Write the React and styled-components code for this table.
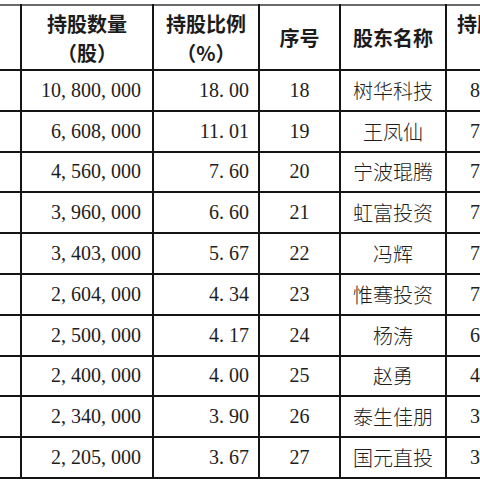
import React from "react";
import styled, { createGlobalStyle } from "styled-components";

const Global = createGlobalStyle`
  html, body { margin: 0; padding: 0; background: #ffffff; }
  #root { width: 480px; height: 480px; }
`;

const Frame = styled.div`
  width: 480px;
  height: 480px;
  overflow: hidden;
  background: #fff;
  padding-top: 4px;
  box-sizing: border-box;
`;

const Table = styled.table`
  border-collapse: collapse;
  table-layout: fixed;
  width: 572px;
  border-top: 2px solid #6a6a6a;
  color: #1c1c1c;
`;

const HeadCell = styled.th`
  height: 63px;
  padding: 0;
  border: 2px solid #151515;
  border-top: none;
  border-left: ${(p) => (p.$first ? "none" : "2px solid #151515")};
  font-family: "Noto Sans CJK SC", "Noto Sans", sans-serif;
  font-weight: 700;
  font-size: 20px;
  line-height: 29px;
  text-align: ${(p) => p.$align || "center"};
  padding-left: ${(p) => p.$pl || 0}px;
  vertical-align: middle;
  white-space: nowrap;
  overflow: hidden;
`;

const Line = styled.div`
  display: block;
`;

const Cell = styled.td`
  height: 38.8px;
  padding: 0 ${(p) => p.$pr || 0}px 0 ${(p) => p.$pl || 0}px;
  border: 2px solid #151515;
  border-left: ${(p) => (p.$first ? "none" : "2px solid #151515")};
  text-align: ${(p) => p.$align || "center"};
  vertical-align: middle;
  white-space: nowrap;
  overflow: hidden;
  font-size: 20px;
  font-family: ${(p) =>
    p.$cjk
      ? '"Noto Sans CJK SC", "Noto Sans", sans-serif'
      : '"Liberation Serif", "Times New Roman", serif'};
  font-weight: ${(p) => (p.$cjk ? 300 : 400)};
  color: #1e1e1e;
`;

const Punct = styled.span`
  margin-right: 5px;
`;

const Num = ({ value }) => {
  const parts = [];
  value.split("").forEach((ch, i) => {
    if (ch === "," || ch === ".") parts.push(<Punct key={i}>{ch}</Punct>);
    else parts.push(ch);
  });
  return <>{parts}</>;
};

const rows = [
  ["10,800,000", "18.00", "18", "树华科技", "840,000"],
  ["6,608,000", "11.01", "19", "王凤仙", "780,000"],
  ["4,560,000", "7.60", "20", "宁波琨腾", "760,000"],
  ["3,960,000", "6.60", "21", "虹富投资", "750,000"],
  ["3,403,000", "5.67", "22", "冯辉", "720,000"],
  ["2,604,000", "4.34", "23", "惟骞投资", "700,000"],
  ["2,500,000", "4.17", "24", "杨涛", "600,000"],
  ["2,400,000", "4.00", "25", "赵勇", "480,000"],
  ["2,340,000", "3.90", "26", "泰生佳朋", "360,000"],
  ["2,205,000", "3.67", "27", "国元直投", "300,000"],
];

export default function App() {
  return (
    <>
      <Global />
      <Frame>
        <Table>
          <colgroup>
            <col style={{ width: 21 }} />
            <col style={{ width: 132 }} />
            <col style={{ width: 106 }} />
            <col style={{ width: 81 }} />
            <col style={{ width: 106 }} />
            <col style={{ width: 126 }} />
          </colgroup>
          <thead>
            <tr>
              <HeadCell $first />
              <HeadCell>
                <Line>持股数量</Line>
                <Line>（股）</Line>
              </HeadCell>
              <HeadCell>
                <Line>持股比例</Line>
                <Line>（%）</Line>
              </HeadCell>
              <HeadCell>序号</HeadCell>
              <HeadCell>股东名称</HeadCell>
              <HeadCell $align="left" $pl={10}>
                <Line>持股数量</Line>
                <Line>&nbsp;&nbsp;&nbsp;&nbsp;（股）</Line>
              </HeadCell>
            </tr>
          </thead>
          <tbody>
            {rows.map((r) => (
              <tr key={r[2]}>
                <Cell $first />
                <Cell $align="right" $pr={11}>
                  <Num value={r[0]} />
                </Cell>
                <Cell $align="right" $pr={9}>
                  <Num value={r[1]} />
                </Cell>
                <Cell>{r[2]}</Cell>
                <Cell $cjk>{r[3]}</Cell>
                <Cell $align="left" $pl={23}>
                  <Num value={r[4]} />
                </Cell>
              </tr>
            ))}
          </tbody>
        </Table>
      </Frame>
    </>
  );
}
